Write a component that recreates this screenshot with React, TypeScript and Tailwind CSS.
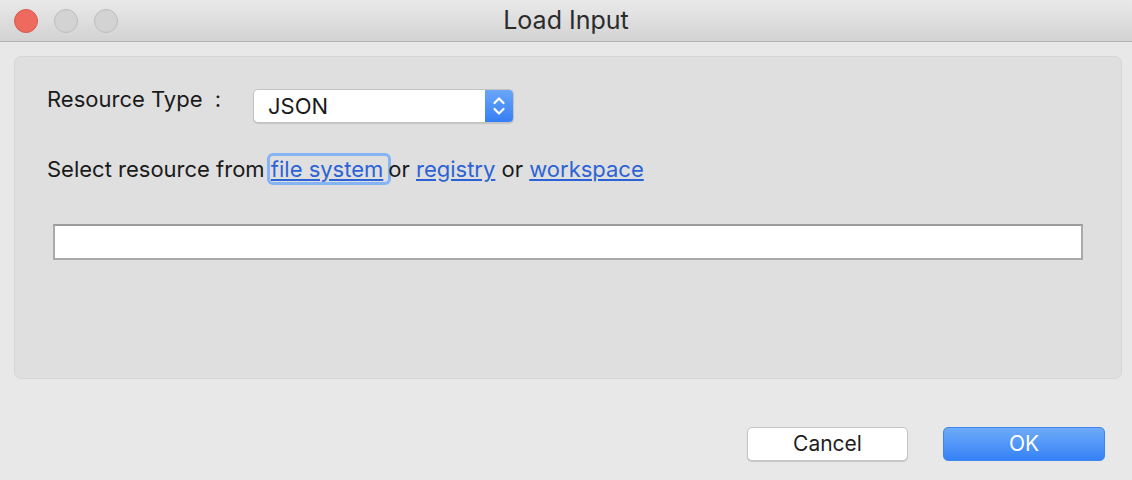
function TrafficLight({ color }: { color: "red" | "gray" }) {
  return color === "red" ? (
    <span className="w-6 h-6 rounded-full bg-[#ee6a5f] border border-[#d65a4f]" />
  ) : (
    <span className="w-6 h-6 rounded-full bg-[#d3d3d3] border border-[#bdbdbd]" />
  )
}

export default function App() {
  return (
    <div className="w-[1132px] h-[480px] bg-[#e8e8e8] flex flex-col font-['Inter','Liberation_Sans',sans-serif] text-[#1a1a1a]">
      {/* title bar */}
      <div className="relative h-[42px] shrink-0 flex items-center bg-gradient-to-b from-[#e9e9e9] to-[#d3d3d3] border-b border-[#b3b3b3]">
        <div className="flex items-center gap-4 pl-[14px]">
          <TrafficLight color="red" />
          <TrafficLight color="gray" />
          <TrafficLight color="gray" />
        </div>
        <div className="absolute inset-0 flex items-center justify-center text-[25px] text-[#2b2b2b] pt-[1px]">
          Load Input
        </div>
      </div>

      {/* panel */}
      <div className="mt-[14px] ml-[14px] mr-[10px] h-[323px] rounded-[7px] bg-[#dfdfdf] border border-[#d6d6d6] px-[32px] pt-[32px]">
        <div className="flex items-start">
          <span className="w-[206px] text-[22px] leading-[24px] -mt-[2px]">Resource Type&nbsp;&nbsp;:</span>
          <div className="flex w-[261px] h-[34px] rounded-[5px] bg-white border border-[#c3c3c3] shadow-[0_1px_1px_rgba(0,0,0,0.12)] overflow-hidden">
            <span className="flex-1 flex items-center pl-[14px] text-[22px] pt-[1px]">JSON</span>
            <span className="w-[28px] flex items-center justify-center bg-gradient-to-b from-[#6aa6f8] to-[#357ef5]">
              <svg width="14" height="24" viewBox="0 0 14 24" fill="none" stroke="white" strokeWidth="2.2" strokeLinecap="round" strokeLinejoin="round">
                <path d="M2.5 9 L7 4.5 L11.5 9" />
                <path d="M2.5 15 L7 19.5 L11.5 15" />
              </svg>
            </span>
          </div>
        </div>

        <div className="mt-[32px] text-[22px] leading-[28px] whitespace-nowrap">
          Select resource from{" "}
          <a className="text-[#2b63d6] underline rounded-[3px] ring-[3px] ring-[#86b3f3] pl-[1px] pr-[5px] -ml-[1px]">file system</a>
          or <a className="text-[#2b63d6] underline">registry</a> or{" "}
          <a className="text-[#2b63d6] underline">workspace</a>
        </div>

        <div className="mt-[41px] ml-[6px] mr-[6px] h-[36px] bg-white border-2 border-[#a9a9a9] border-t-[#9c9c9c]" />
      </div>

      {/* buttons */}
      <div className="flex justify-end gap-[35px] pr-[27px] mt-[48px]">
        <button className="w-[161px] h-[34px] rounded-[5px] bg-white border border-[#c4c4c4] shadow-[0_1px_1px_rgba(0,0,0,0.15)] text-[21px] text-[#1f1f1f]">
          Cancel
        </button>
        <button className="w-[162px] h-[34px] rounded-[5px] bg-gradient-to-b from-[#6eaaf8] to-[#3481f6] border border-[#3f86f0] text-[21px] text-white">
          OK
        </button>
      </div>
    </div>
  )
}
